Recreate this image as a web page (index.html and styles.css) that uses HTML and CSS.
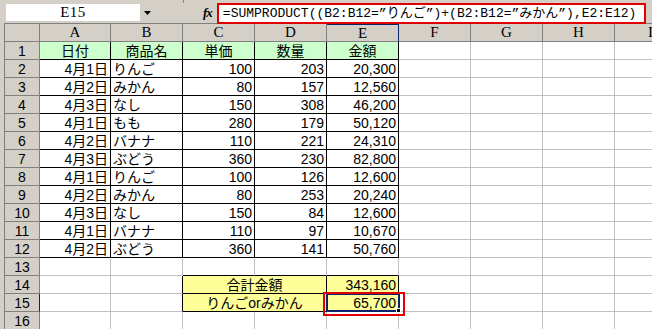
FILE: index.html
```html
<!DOCTYPE html>
<html lang="ja">
<head>
<meta charset="utf-8">
<link rel="stylesheet" href="styles.css">
</head>
<body>
<div class="app">
  <div class="fbar">
    <div class="namebox">E15</div>
    <div class="dd"><svg width="8" height="6" viewBox="0 0 8 6"><path d="M0 1h7L3.5 5z" fill="#000"/></svg></div>
    <div class="sep"></div>
    <div class="fx">fx</div>
    <div class="formula">=SUMPRODUCT((B2:B12=”りんご”)+(B2:B12=”みかん”),E2:E12)</div>
  </div>
  <div class="sheet">
    <div class="row hdr">
      <div class="rh corner"></div>
      <div class="ch a">A</div><div class="ch">B</div><div class="ch">C</div><div class="ch">D</div><div class="ch act">E</div><div class="ch">F</div><div class="ch">G</div><div class="ch">H</div><div class="ch">I</div>
    </div>
    <div class="row"><div class="rh">1</div><div class="c a t g ctr">日付</div><div class="c t g ctr">商品名</div><div class="c t g ctr">単価</div><div class="c t g ctr">数量</div><div class="c t g ctr">金額</div><div class="c"></div><div class="c"></div><div class="c"></div><div class="c"></div></div>
    <div class="row"><div class="rh">2</div><div class="c a t r">4月1日</div><div class="c t">りんご</div><div class="c t r">100</div><div class="c t r">203</div><div class="c t r">20,300</div><div class="c"></div><div class="c"></div><div class="c"></div><div class="c"></div></div>
    <div class="row"><div class="rh">3</div><div class="c a t r">4月2日</div><div class="c t">みかん</div><div class="c t r">80</div><div class="c t r">157</div><div class="c t r">12,560</div><div class="c"></div><div class="c"></div><div class="c"></div><div class="c"></div></div>
    <div class="row"><div class="rh">4</div><div class="c a t r">4月3日</div><div class="c t">なし</div><div class="c t r">150</div><div class="c t r">308</div><div class="c t r">46,200</div><div class="c"></div><div class="c"></div><div class="c"></div><div class="c"></div></div>
    <div class="row"><div class="rh">5</div><div class="c a t r">4月1日</div><div class="c t">もも</div><div class="c t r">280</div><div class="c t r">179</div><div class="c t r">50,120</div><div class="c"></div><div class="c"></div><div class="c"></div><div class="c"></div></div>
    <div class="row"><div class="rh">6</div><div class="c a t r">4月2日</div><div class="c t">バナナ</div><div class="c t r">110</div><div class="c t r">221</div><div class="c t r">24,310</div><div class="c"></div><div class="c"></div><div class="c"></div><div class="c"></div></div>
    <div class="row"><div class="rh">7</div><div class="c a t r">4月3日</div><div class="c t">ぶどう</div><div class="c t r">360</div><div class="c t r">230</div><div class="c t r">82,800</div><div class="c"></div><div class="c"></div><div class="c"></div><div class="c"></div></div>
    <div class="row"><div class="rh">8</div><div class="c a t r">4月1日</div><div class="c t">りんご</div><div class="c t r">100</div><div class="c t r">126</div><div class="c t r">12,600</div><div class="c"></div><div class="c"></div><div class="c"></div><div class="c"></div></div>
    <div class="row"><div class="rh">9</div><div class="c a t r">4月2日</div><div class="c t">みかん</div><div class="c t r">80</div><div class="c t r">253</div><div class="c t r">20,240</div><div class="c"></div><div class="c"></div><div class="c"></div><div class="c"></div></div>
    <div class="row"><div class="rh">10</div><div class="c a t r">4月3日</div><div class="c t">なし</div><div class="c t r">150</div><div class="c t r">84</div><div class="c t r">12,600</div><div class="c"></div><div class="c"></div><div class="c"></div><div class="c"></div></div>
    <div class="row"><div class="rh">11</div><div class="c a t r">4月1日</div><div class="c t">バナナ</div><div class="c t r">110</div><div class="c t r">97</div><div class="c t r">10,670</div><div class="c"></div><div class="c"></div><div class="c"></div><div class="c"></div></div>
    <div class="row"><div class="rh">12</div><div class="c a t r">4月2日</div><div class="c t">ぶどう</div><div class="c t r">360</div><div class="c t r">141</div><div class="c t r">50,760</div><div class="c"></div><div class="c"></div><div class="c"></div><div class="c"></div></div>
    <div class="row"><div class="rh">13</div><div class="c a"></div><div class="c"></div><div class="c bb"></div><div class="c bb"></div><div class="c bb"></div><div class="c"></div><div class="c"></div><div class="c"></div><div class="c"></div></div>
    <div class="row"><div class="rh">14</div><div class="c a"></div><div class="c br"></div><div class="c m2 t y ctr">合計金額</div><div class="c t y r">343,160</div><div class="c"></div><div class="c"></div><div class="c"></div><div class="c"></div></div>
    <div class="row"><div class="rh act">15</div><div class="c a"></div><div class="c br"></div><div class="c m2 t y ctr">りんごorみかん</div><div class="c t y r active">65,700<span class="handle"></span></div><div class="c"></div><div class="c"></div><div class="c"></div><div class="c"></div></div>
    <div class="row"><div class="rh">16</div><div class="c a"></div><div class="c"></div><div class="c"></div><div class="c"></div><div class="c"></div><div class="c"></div><div class="c"></div><div class="c"></div><div class="c"></div></div>
    <div class="mark"></div>
  </div>
</div>
</body>
</html>
```
FILE: styles.css
```css
html, body {
  margin: 0;
  padding: 0;
  background: #d4d0c8;
  overflow: hidden;
}
body {
  width: 652px;
  height: 329px;
  font-family: "Liberation Sans", "Noto Sans CJK JP", sans-serif;
  color: #000;
}
.app {
  width: 652px;
  height: 329px;
  overflow: hidden;
}
.fbar {
  height: 23px;
  display: flex;
  align-items: flex-start;
  padding-left: 6px;
  box-sizing: border-box;
}
.namebox {
  margin-top: 4px;
  width: 134px;
  height: 17px;
  background: #fff;
  font-family: "Liberation Serif", serif;
  font-size: 15px;
  line-height: 17px;
  text-align: center;
  letter-spacing: 0.5px;
}
.dd {
  width: 16px;
  height: 17px;
  margin-top: 4px;
  display: flex;
  align-items: center;
  justify-content: center;
}
.sep {
  width: 1px;
  height: 3px;
  background: #808080;
  margin-left: 27px;
}
.fx {
  margin-left: 19px;
  margin-top: 4px;
  font-family: "Liberation Serif", serif;
  font-style: italic;
  font-weight: bold;
  font-size: 13px;
  line-height: 17px;
  letter-spacing: -1px;
}
.formula {
  position: relative;
  z-index: 2;
  margin-top: 3px;
  margin-left: 5px;
  width: 429px;
  height: 21px;
  box-sizing: border-box;
  border: 2px solid #e00000;
  background: #fff;
  font-family: "Liberation Mono", "Noto Sans CJK JP", monospace;
  font-size: 13px;
  line-height: 17px;
  padding-left: 4px;
  white-space: nowrap;
  overflow: hidden;
}
.sheet {
  position: relative;
  margin-left: 4px;
  border-left: 1px solid #808080;
  border-top: 1px solid #808080;
  background: #fff;
  width: 700px;
}
.row {
  display: flex;
  height: 18px;
}
.rh, .ch, .c {
  flex: none;
  box-sizing: border-box;
  height: 18px;
  white-space: nowrap;
  overflow: hidden;
}
.rh {
  width: 35px;
  background: #d4d0c8;
  border-right: 1px solid #808080;
  border-bottom: 1px solid #808080;
  text-align: center;
  font-family: "Liberation Sans", sans-serif;
  font-size: 14px;
  line-height: 18px;
}
.rh.act {
  border-right-color: #0a246a;
}
.ch {
  width: 72px;
  background: #d4d0c8;
  border-right: 1px solid #808080;
  border-bottom: 1px solid #808080;
  text-align: center;
  font-family: "Liberation Serif", serif;
  font-size: 15px;
  line-height: 17px;
}
.ch.act {
  border-right-color: #0a246a;
  border-top: 1px solid #0a246a;
  line-height: 16px;
}
.c {
  width: 72px;
  border-right: 1px solid #c0c0c0;
  border-bottom: 1px solid #c0c0c0;
  padding: 0 2px;
  font-size: 14px;
  line-height: 18px;
}
.a { width: 71px; }
.m2 { width: 144px; }
.t {
  border-right-color: #000;
  border-bottom-color: #000;
}
.bb { border-bottom-color: #000; }
.br { border-right-color: #000; }
.g { background: #ccffcc; }
.y { background: #ffff99; }
.r { text-align: right; }
.ctr { text-align: center; }
.active {
  position: relative;
  overflow: visible;
}
.active::before {
  content: "";
  position: absolute;
  left: -1px;
  top: -1px;
  right: -2px;
  bottom: -1px;
  border: 2px solid #0a246a;
}
.handle {
  position: absolute;
  right: -3px;
  bottom: -2px;
  width: 5px;
  height: 5px;
  background: #000;
  border: 1px solid #fff;
  box-sizing: border-box;
}
.mark {
  position: absolute;
  left: 318px;
  top: 268px;
  width: 82px;
  height: 24px;
  box-sizing: border-box;
  border: 2px solid #e00000;
  pointer-events: none;
}
```
